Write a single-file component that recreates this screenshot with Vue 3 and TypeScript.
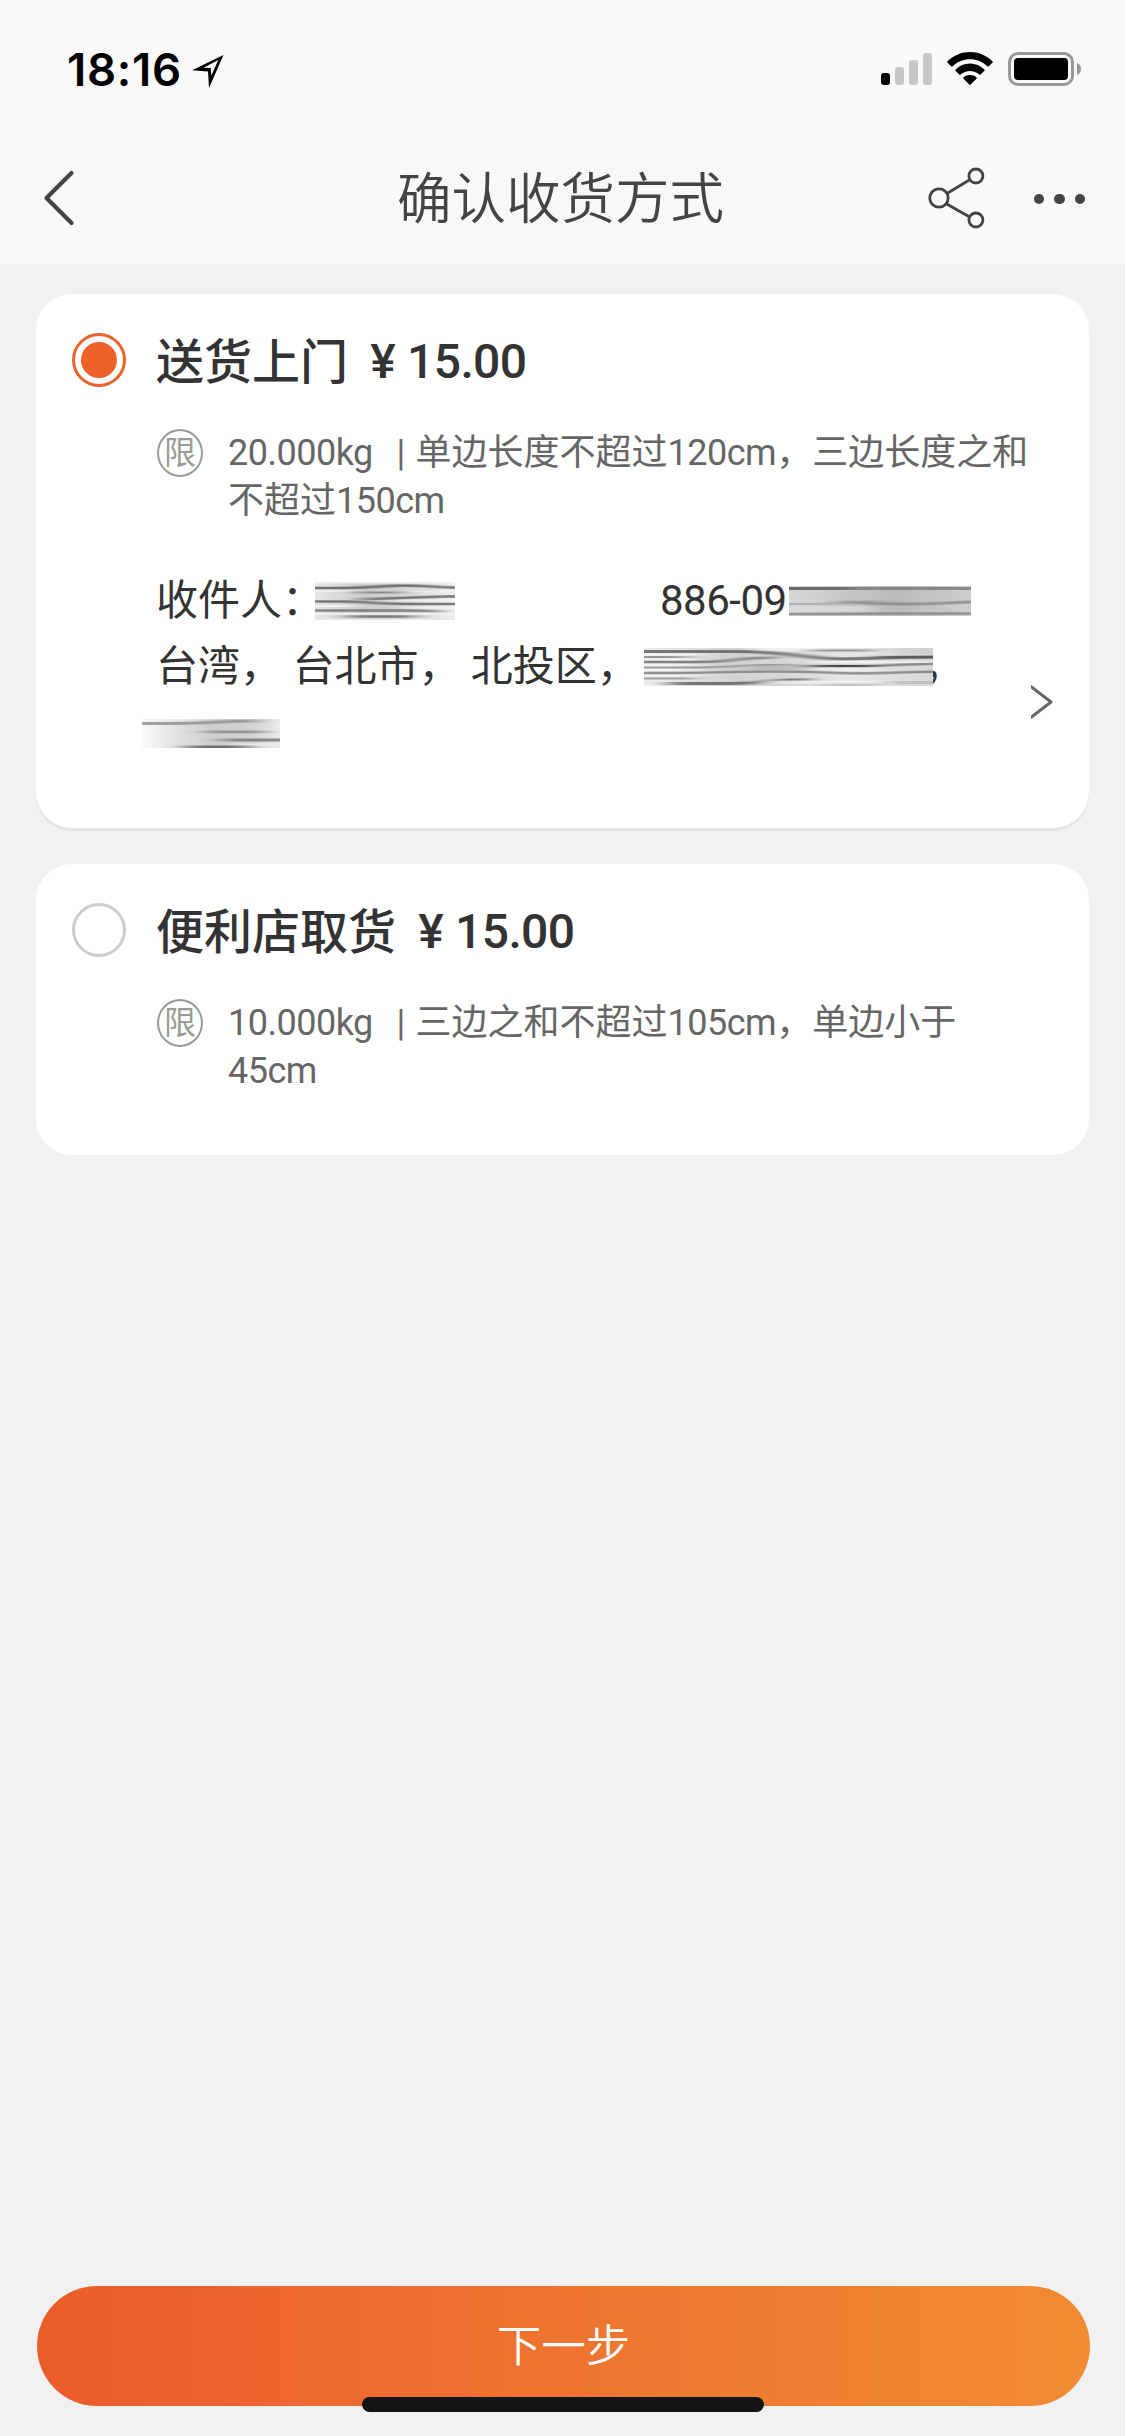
<script setup lang="ts">
interface Streak {
  d: string
  w: number
  c: string
}

interface Smudge {
  width: number
  height: number
  stops: [number, string][]
  streaks: Streak[]
}

interface DeliveryOption {
  id: string
  name: string
  price: string
  weight: string
  limit: string[]
  selected: boolean
}

const options: DeliveryOption[] = [
  {
    id: 'home',
    name: '送货上门',
    price: '15.00',
    weight: '20.000kg',
    limit: ['单边长度不超过120cm，三边长度之和', '不超过150cm'],
    selected: true,
  },
  {
    id: 'store',
    name: '便利店取货',
    price: '15.00',
    weight: '10.000kg',
    limit: ['三边之和不超过105cm，单边小于', '45cm'],
    selected: false,
  },
]

// Splits a line so that Latin runs can be tracked tighter than Chinese ones.
const runs = (line: string) =>
  line
    .split(/([0-9a-z.]+)/)
    .filter(Boolean)
    .map((text) => ({ text, latin: /^[0-9a-z.]+$/.test(text) }))

// Smeared strips covering the private parts of the address.
const smudges: Record<string, Smudge> = {
  name: {
    width: 140,
    height: 38,
    stops: [[0, '#e6e6e6'], [0.35, '#cdcdcd'], [0.6, '#d2d2d2'], [1, '#f0f0f0']],
    streaks: [
      { d: 'M-20 0.5H160', w: 2, c: '#f2f2f2' },
      { d: 'M-30 6H30C60 6 65 3.5 90 3.5S120 6 170 6', w: 2.6, c: '#585858' },
      { d: 'M-20 9H35M95 9.5H160', w: 2, c: '#f0f0f0' },
      { d: 'M42 10.5H86', w: 2, c: '#777' },
      { d: 'M48 17C80 17 100 14 170 14', w: 2.4, c: '#5c5c5c' },
      { d: 'M-20 19.5H30C55 19.5 60 22 90 22H170', w: 2.5, c: '#606060' },
      { d: 'M-20 24H40M90 25.5H160M80 18.5H140', w: 2, c: '#f4f4f4' },
      { d: 'M-20 28.5H100L125 29.5', w: 2.6, c: '#6e6e6e' },
      { d: 'M-20 32H160', w: 1.8, c: '#f1f1f1' },
      { d: 'M34 34.5H98', w: 2.4, c: '#666' },
      { d: 'M-20 37.5H160', w: 1.5, c: '#ececec' },
    ],
  },
  phone: {
    width: 182,
    height: 30,
    stops: [[0, '#d8d8d8'], [0.25, '#cacaca'], [0.6, '#bbb'], [1, '#cecece']],
    streaks: [
      { d: 'M-30 2.5H210', w: 2.8, c: '#7a7a7a' },
      { d: 'M-30 2.5H60', w: 2.4, c: '#5c5c5c' },
      { d: 'M-30 18H30C55 18 70 14.5 100 14.5', w: 2.2, c: '#aaa' },
      { d: 'M55 15.5C80 18 100 18 125 18S160 15.5 210 15.5', w: 2.8, c: '#888' },
      { d: 'M-30 23H80', w: 5, c: '#ddd' },
      { d: 'M-30 28H40L100 27.5H210', w: 2.5, c: '#858585' },
    ],
  },
  street: {
    width: 289,
    height: 38,
    stops: [[0, '#eee'], [0.3, '#d2d2d2'], [0.55, '#dadada'], [0.7, '#e6e6e6'], [1, '#d8d8d8']],
    streaks: [
      { d: 'M110 1H180', w: 5, c: '#f7f7f7' },
      { d: 'M-30 6.5H55M-30 11.5H50M-30 17H50M-30 22H45M-30 27.5H55', w: 2.2, c: '#f6f6f6' },
      { d: 'M-30 3.5H100C150 4.5 165 11 197 11S235 9 320 9', w: 3, c: '#5c5c5c' },
      { d: 'M-30 9H42', w: 1.8, c: '#808080' },
      { d: 'M-30 14H58C85 14 95 9.5 130 9.5', w: 2.4, c: '#6a6a6a' },
      { d: 'M-30 19.5H50C90 19.5 100 16 150 17', w: 2, c: '#8c8c8c' },
      { d: 'M-30 25H35C70 25 70 23.5 132 23.5S180 25.5 218 25.5S240 23.5 320 23.5', w: 2.4, c: '#7c7c7c' },
      { d: 'M100 20H165', w: 5, c: '#b5b5b5' },
      { d: 'M160 18H225C245 18 255 15.5 320 15.5', w: 2.6, c: '#777' },
      { d: 'M175 18H226', w: 2.2, c: '#333' },
      { d: 'M235 9H320', w: 2.4, c: '#555' },
      { d: 'M-30 30.5H50', w: 2, c: '#8c8c8c' },
      { d: 'M25 35.5H90C120 35.5 125 31.5 165 31.5', w: 2.8, c: '#5c5c5c' },
      { d: 'M165 2.5H228', w: 2.2, c: '#808080' },
      { d: 'M175 14H290M170 21.5H235', w: 2.2, c: '#f4f4f4' },
      { d: 'M250 3H320', w: 6, c: '#cfcfcf' },
      { d: 'M120 34H240', w: 3, c: '#f3f3f3' },
      { d: 'M245 34.5H320M180 37H230', w: 3, c: '#bbb' },
    ],
  },
  tail: {
    width: 138,
    height: 29,
    stops: [[0, '#fafafa'], [0.25, '#e2e2e2'], [0.5, '#cecece'], [0.8, '#d2d2d2'], [1, '#ececec']],
    streaks: [
      { d: 'M-20 0.3H60', w: 2, c: '#eee' },
      { d: 'M-20 4.5H40C70 4 75 2 115 2', w: 2.8, c: '#8c8c8c' },
      { d: 'M65 12.8H122', w: 2.8, c: '#808080' },
      { d: 'M80 21H170', w: 2.8, c: '#707070' },
      { d: 'M95 25.5H160', w: 2.5, c: '#eee' },
      { d: 'M45 28H104', w: 2.8, c: '#555' },
    ],
  },
}

const signalBars = [12, 18, 25, 32]
</script>

<template>
  <div class="page">
    <svg width="0" height="0" class="defs" aria-hidden="true">
      <defs>
        <filter id="smear" filterUnits="userSpaceOnUse" x="-40" y="-10" width="380" height="60" color-interpolation-filters="sRGB">
          <feGaussianBlur stdDeviation="11 0.7" />
        </filter>
      </defs>
    </svg>

    <header class="top">
      <div class="status">
        <div class="clock">
          <span class="time">18:16</span>
          <svg class="locate" width="32" height="33" viewBox="0 0 32 33">
            <path fill="#000" fill-rule="evenodd" d="M31.5 0 17 33 16 16.5 0 15.3ZM26.3 5 11.5 12.7 18.7 13 19.3 20.5Z" />
          </svg>
        </div>
        <div class="indicators">
          <div class="signal">
            <i v-for="(h, i) in signalBars" :key="h" :class="{ on: i === 0 }" :style="{ height: h + 'px' }"></i>
          </div>
          <svg class="wifi" width="46" height="34" viewBox="0 0 46 34">
            <path d="M0.6 10.7a1 1 0 0 1 0-1.5C6.700 3.300 14.500 0 23 0s16.300 3.300 22.400 9.200a1 1 0 0 1 0 1.500L41.800 14.200a1 1 0 0 1-1.400 0C35.600 9.700 29.500 7.200 23 7.200S10.400 9.700 5.600 14.200a1 1 0 0 1-1.400 0Z" />
            <path d="M8.600 18.800a1 1 0 0 1 0-1.400C12.500 13.800 17.500 11.600 23 11.600s10.500 2.200 14.400 5.800a1 1 0 0 1 0 1.400L33.700 22.400a1 1 0 0 1-1.400 0C29.700 20.200 26.500 18.900 23 18.900s-6.700 1.300-9.300 3.500a1 1 0 0 1-1.400 0Z" />
            <path d="M16.600 26.800a1 1 0 0 1 0-1.500C18.300 23.900 20.500 23 23 23s4.700.9 6.400 2.300a1 1 0 0 1 0 1.500L23.700 32.600a1 1 0 0 1-1.400 0Z" />
          </svg>
          <svg class="battery" width="74" height="34" viewBox="0 0 74 34">
            <rect x="1.500" y="1.500" width="63" height="31" rx="8.500" fill="none" stroke="#999" stroke-width="3" />
            <rect x="6" y="6" width="54" height="22" rx="4" fill="#000" />
            <path d="M69 11c2.500 1 4 3.300 4 6s-1.500 5-4 6Z" fill="#999" />
          </svg>
        </div>
      </div>
      <nav class="nav">
        <svg class="back" width="34" height="58" viewBox="0 0 34 58">
          <path d="M29.500 4 4.500 29l25 25" fill="none" stroke="#444" stroke-width="4.200" stroke-linecap="round" stroke-linejoin="round" />
        </svg>
        <h1>确认收货方式</h1>
        <div class="actions">
          <svg width="58" height="62" viewBox="0 0 58 62" fill="none" stroke="#444" stroke-width="2.800">
            <circle cx="11" cy="31" r="9.200" />
            <circle cx="47.900" cy="9" r="7" />
            <circle cx="47.900" cy="53" r="7" />
            <path d="M19 26.500 41.700 12.800M18.300 36.800 41.700 50" />
          </svg>
          <div class="dots"><i></i><i></i><i></i></div>
        </div>
      </nav>
    </header>

    <main>
      <section v-for="o in options" :key="o.id" class="card" :class="{ selected: o.selected }">
        <div class="head">
          <span class="radio"><i v-if="o.selected"></i></span>
          <h2><span class="name">{{ o.name }}</span><span class="yen">¥</span><span class="price">{{ o.price }}</span></h2>
        </div>
        <div class="limit">
          <span class="badge"><span>限</span></span>
          <div class="rules">
            <p v-for="(line, n) in o.limit" :key="line">
              <template v-if="n === 0"><span class="weight latin">{{ o.weight }}</span><span class="bar">|</span></template>
              <span v-for="r in runs(line)" :key="r.text" :class="{ latin: r.latin }">{{ r.text }}</span>
            </p>
          </div>
        </div>
        <div v-if="o.selected" class="address">
          <div class="lines">
            <div class="line">
              <span class="recipient">收件人：</span>
              <svg class="smudge" :width="smudges.name.width" :height="smudges.name.height">
                <defs>
                  <linearGradient id="g-name"><stop v-for="s in smudges.name.stops" :key="s[0]" :offset="s[0]" :stop-color="s[1]" /></linearGradient>
                </defs>
                <rect width="100%" height="100%" fill="url(#g-name)" />
                <path v-for="(s, i) in smudges.name.streaks" :key="i" :d="s.d" :stroke-width="s.w" :stroke="s.c" fill="none" filter="url(#smear)" />
              </svg>
              <span class="tel">886-09</span>
              <svg class="smudge" :width="smudges.phone.width" :height="smudges.phone.height">
                <defs>
                  <linearGradient id="g-phone"><stop v-for="s in smudges.phone.stops" :key="s[0]" :offset="s[0]" :stop-color="s[1]" /></linearGradient>
                </defs>
                <rect width="100%" height="100%" fill="url(#g-phone)" />
                <path v-for="(s, i) in smudges.phone.streaks" :key="i" :d="s.d" :stroke-width="s.w" :stroke="s.c" fill="none" filter="url(#smear)" />
              </svg>
            </div>
            <div class="line">
              <span>台湾， 台北市， 北投区，</span>
              <svg class="smudge street" :width="smudges.street.width" :height="smudges.street.height">
                <defs>
                  <linearGradient id="g-street"><stop v-for="s in smudges.street.stops" :key="s[0]" :offset="s[0]" :stop-color="s[1]" /></linearGradient>
                </defs>
                <rect width="100%" height="100%" fill="url(#g-street)" />
                <path v-for="(s, i) in smudges.street.streaks" :key="i" :d="s.d" :stroke-width="s.w" :stroke="s.c" fill="none" filter="url(#smear)" />
              </svg>
              <span class="comma">，</span>
            </div>
            <div class="line">
              <svg class="smudge tail" :width="smudges.tail.width" :height="smudges.tail.height">
                <defs>
                  <linearGradient id="g-tail"><stop v-for="s in smudges.tail.stops" :key="s[0]" :offset="s[0]" :stop-color="s[1]" /></linearGradient>
                </defs>
                <rect width="100%" height="100%" fill="url(#g-tail)" />
                <path v-for="(s, i) in smudges.tail.streaks" :key="i" :d="s.d" :stroke-width="s.w" :stroke="s.c" fill="none" filter="url(#smear)" />
              </svg>
            </div>
          </div>
          <svg class="go" width="22" height="34" viewBox="0 0 22 34">
            <path d="M-1 0.800 20 17-1 33.200" fill="none" stroke="#666" stroke-width="3" stroke-linejoin="round" />
          </svg>
        </div>
      </section>
    </main>

    <footer>
      <button type="button">下一步</button>
      <span class="home"></span>
    </footer>
  </div>
</template>

<style>
body {
  margin: 0;
  background: #f1f1f1;
}
</style>

<style scoped>
.page {
  width: 1125px;
  height: 2436px;
  display: flex;
  flex-direction: column;
  background: #f1f1f1;
  font-family: Roboto, "Noto Sans CJK SC", sans-serif;
  color: #333;
  overflow: hidden;
}
.defs {
  position: absolute;
}
h1,
h2,
p {
  margin: 0;
}
i {
  display: block;
}
svg {
  display: block;
  flex: none;
}

.top {
  height: 264px;
  background: radial-gradient(ellipse 168px 90px at 567px 150px, #f8f8f8 99%, transparent 100%), #f9f9f9;
}
.status {
  height: 132px;
  display: flex;
  justify-content: space-between;
}
.clock {
  display: flex;
  padding-left: 67px;
}
.time {
  font: 600 45.500px/60px Inter, sans-serif;
  letter-spacing: 0.7px;
  padding-top: 40px;
  width: 125px;
  color: #000;
  white-space: nowrap;
}
.locate {
  margin-top: 55px;
}
.indicators {
  display: flex;
  padding: 52px 43px 0 0;
}
.signal {
  display: flex;
  align-items: flex-end;
  gap: 5px;
  height: 33px;
}
.signal i {
  width: 9px;
  border-radius: 3px;
  background: #c7c7c7;
}
.signal i.on {
  background: #000;
}
.wifi {
  margin: 0 15px;
}
.nav {
  height: 132px;
  display: flex;
  align-items: center;
}
.back {
  margin-left: 42px;
}
.nav h1 {
  flex: 1;
  margin-left: 321px;
  padding-top: 2px;
  font-weight: 350;
  font-size: 54.500px;
  line-height: 70px;
  color: #444;
}
.actions {
  display: flex;
  align-items: center;
  gap: 48px;
  padding-right: 40px;
}
.dots {
  display: flex;
  gap: 10px;
  padding-top: 2px;
}
.dots i {
  width: 10.500px;
  height: 10.500px;
  border-radius: 50%;
  background: #444;
}

main {
  flex: 1;
  display: flex;
  flex-direction: column;
  gap: 36px;
  padding: 30px 36px 0;
}
.card {
  box-sizing: border-box;
  height: 291px;
  padding: 39px 36px 0;
  border-radius: 36px;
  background: #fff;
}
.card.selected {
  height: 534px;
  box-shadow: 0 3px 0 #e4e4e4;
}
.head {
  display: flex;
  height: 54px;
}
.radio {
  box-sizing: border-box;
  width: 54px;
  height: 54px;
  border: 3px solid #ccc;
  border-radius: 50%;
  padding: 6px;
}
.selected .radio {
  border-color: #ee6229;
}
.radio i {
  width: 36px;
  height: 36px;
  border-radius: 50%;
  background: #ee6229;
}
h2 {
  display: flex;
  margin: 2px 0 0 30px;
  font-size: 48px;
  line-height: 54px;
  font-weight: 500;
  white-space: nowrap;
}
.name {
  padding-top: 1px;
}
.yen {
  width: 48px;
  margin-left: 11px;
  text-align: center;
}
.price {
  letter-spacing: -0.6px;
}
.limit {
  display: flex;
  margin: 42px 0 0 85px;
  color: #666;
}
.badge {
  box-sizing: border-box;
  width: 46px;
  height: 48px;
  border: 2.500px solid #979c94;
  border-radius: 50%;
  color: #979c94;
  font-size: 32px;
  line-height: 44px;
  text-align: center;
}
.badge span {
  display: block;
  margin: 0 -4px;
}
.rules {
  margin-left: 25px;
  font-size: 36px;
}
.rules p {
  display: flex;
  height: 48px;
  line-height: 48px;
  white-space: nowrap;
}
.latin {
  letter-spacing: -0.5px;
}
.weight {
  width: 168.500px;
}
.bar {
  width: 19px;
}
.address {
  display: flex;
  align-items: flex-start;
  margin: 43px 0 0 84px;
  font-size: 42px;
  line-height: 66px;
}
.lines {
  width: 876px;
}
.line {
  height: 66px;
  display: flex;
  align-items: center;
  white-space: nowrap;
}
.recipient {
  width: 159px;
}
.tel {
  margin-left: 205px;
  width: 129px;
  letter-spacing: -0.500px;
}
.street {
  margin-left: 5px;
}
.comma {
  width: 20px;
  margin-left: -10px;
}
.smudge {
  overflow: hidden;
  position: relative;
}
.smudge path {
  opacity: 0.8;
}
.tail {
  margin-left: -14px;
}
.go {
  flex: none;
  margin-top: 117px;
  margin-left: 2px;
}

footer {
  height: 150px;
  padding: 0 35px 0 37px;
  position: relative;
}
button {
  display: block;
  width: 100%;
  height: 120px;
  padding: 0;
  border: 0;
  border-radius: 60px;
  background: linear-gradient(90deg, #ec5c2b, #ee7430 50%, #f08c32);
  color: #fff;
  font: 350 44.500px/122px Roboto, "Noto Sans CJK SC", sans-serif;
}
.home {
  position: absolute;
  left: 362px;
  top: 111px;
  width: 402px;
  height: 15px;
  border-radius: 8px;
  background: #141414;
}
</style>
